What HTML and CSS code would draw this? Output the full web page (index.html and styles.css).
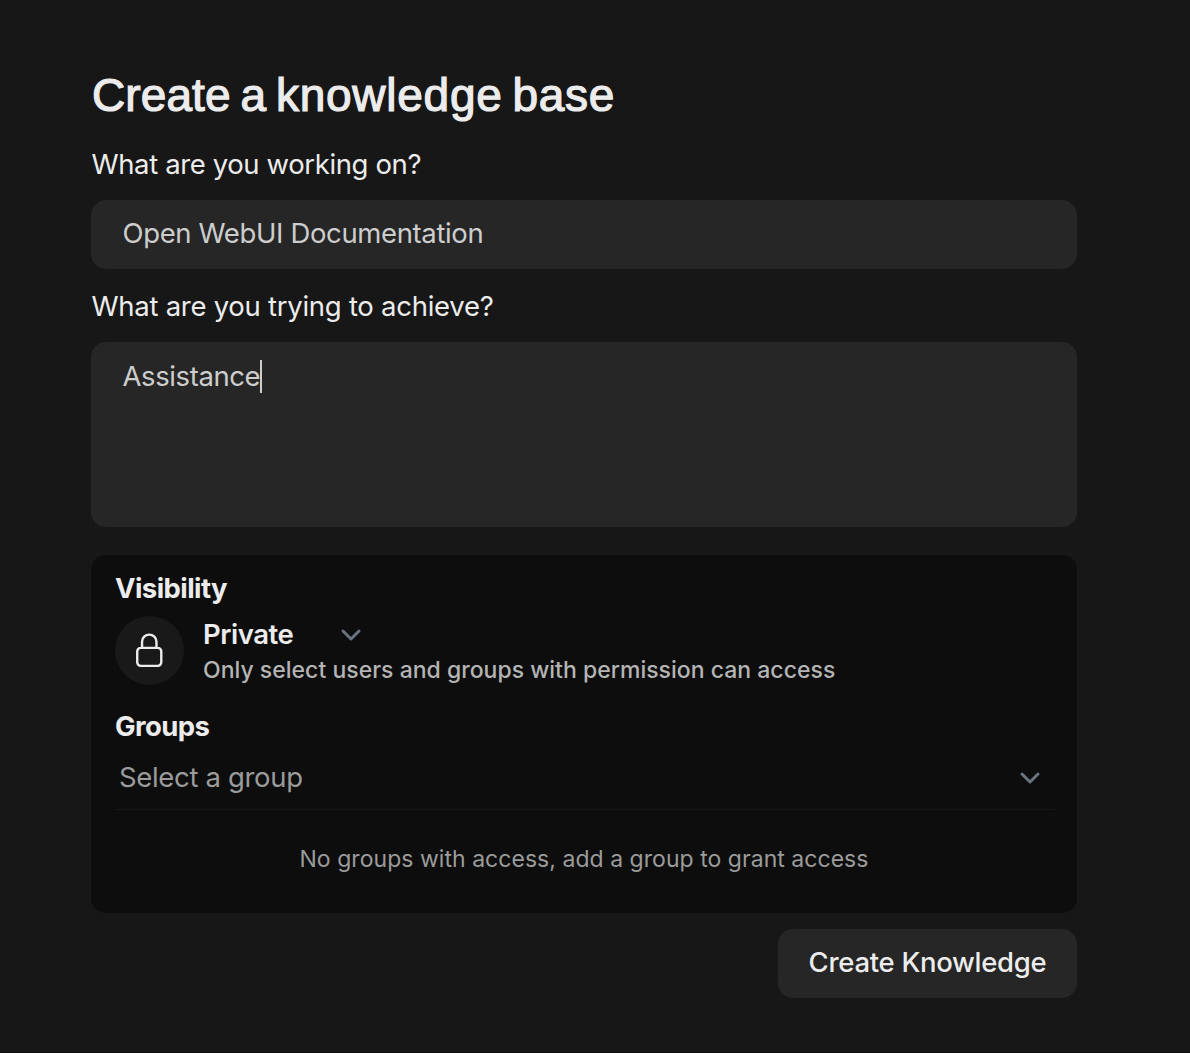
FILE: index.html
```html
<!DOCTYPE html>
<html lang="en">
<head>
<meta charset="utf-8">
<title>Create a knowledge base</title>
<link rel="stylesheet" href="styles.css">
</head>
<body>
<main class="page">
  <h1 class="title">Create a <span class="wide">knowledge</span> <span class="wide">base</span></h1>
  <div class="label label-first">What are you working on?</div>
  <div class="field name">Open WebUI Documentation</div>
  <div class="label label-second">What are you trying to achieve?</div>
  <div class="field area"><span>Assistance</span><i class="caret"></i></div>
  <section class="access">
    <h2 class="heading">Visibility</h2>
    <div class="visibility">
      <div class="badge">
        <svg class="lock" viewBox="0 0 24 24" fill="none" stroke="currentColor" stroke-width="1.5" stroke-linecap="round" stroke-linejoin="round"><path d="M16.5 10.5V6.75a4.5 4.5 0 1 0-9 0v3.75m-.75 11.25h10.5a2.25 2.25 0 0 0 2.25-2.25v-6.75a2.25 2.25 0 0 0-2.25-2.25H6.75a2.25 2.25 0 0 0-2.25 2.25v6.75a2.25 2.25 0 0 0 2.25 2.25Z"/></svg>
      </div>
      <div class="choice">
        <div class="select"><span>Private</span>
          <svg class="chevron" viewBox="0 0 20 20" fill="none" stroke="currentColor" stroke-linecap="round" stroke-linejoin="round"><path d="m6 8.5 4 4 4-4"/></svg>
        </div>
        <div class="hint">Only select users and groups with permission can access</div>
      </div>
    </div>
    <h2 class="heading groups">Groups</h2>
    <div class="group-select"><span>Select a group</span>
      <svg class="chevron" viewBox="0 0 20 20" fill="none" stroke="currentColor" stroke-linecap="round" stroke-linejoin="round"><path d="m6 8.5 4 4 4-4"/></svg>
    </div>
    <div class="empty">No groups with access, add a group to grant access</div>
  </section>
  <div class="actions"><button class="create">Create Knowledge</button></div>
</main>
</body>
</html>
```
FILE: styles.css
```css
* { box-sizing: border-box; }
body { margin: 0; background: #171717; color: #ececec; font-family: Inter, "Liberation Sans", sans-serif; font-size: 27.5px; border-bottom: 1px solid #0d0d0d; }
.page { width: 986px; height: 1052px; margin-left: 91px; padding-top: 67px; display: flex; flex-direction: column; }
.title { margin: 0; padding-left: 1px; height: 56px; line-height: 56px; font-family: "Liberation Sans", sans-serif; font-size: 46px; font-weight: 500; letter-spacing: 0.1px; word-spacing: -3.1px; -webkit-text-stroke: 1.2px currentColor; white-space: nowrap; }
.wide { letter-spacing: 0.75px; }
.label { height: 40px; line-height: 40px; margin-top: 21px; padding-left: 0.5px; letter-spacing: -0.38px; }
.label-second { margin-top: 17px; letter-spacing: -0.27px; }
.field { margin-top: 16px; border-radius: 15px; background: #262626; color: #cdcdcd; padding: 14px 31.5px; line-height: 40px; }
.name { height: 69px; padding-top: 13px; letter-spacing: -0.37px; }
.area { height: 185px; display: flex; letter-spacing: -0.4px; }
.caret { width: 2px; height: 33px; background: #cdcdcd; margin-top: 4px; }
.access { margin-top: 28px; height: 358px; border-radius: 15px; background: #0d0d0d; padding: 13px 24px; }
.heading { margin: 0; height: 40px; line-height: 40px; font-size: 27.5px; font-weight: 650; letter-spacing: -0.58px; }
.visibility { display: flex; gap: 19px; margin-top: 8px; }
.badge { width: 69px; height: 69px; border-radius: 50%; background: #191919; display: flex; align-items: center; justify-content: center; padding-right: 1px; }
.lock { width: 38.5px; height: 38.5px; }
.choice { font-weight: 500; }
.select { display: flex; align-items: center; justify-content: space-between; width: 168px; height: 36px; font-weight: 600; letter-spacing: -0.45px; }
.chevron { width: 40px; height: 40px; color: #6b7280; flex: none; stroke-width: 1.5; }
.hint { height: 36px; line-height: 36px; font-size: 23px; letter-spacing: 0.015px; color: #b4b4b4; white-space: nowrap; }
.groups { margin-top: 18px; }
.group-select { height: 64px; padding: 0 5px 2px 4px; width: 940px; border-bottom: 1px solid #171717; display: flex; align-items: center; justify-content: space-between; color: #9b9b9b; letter-spacing: -0.33px; }
.empty { height: 98px; line-height: 98px; font-size: 23px; letter-spacing: 0.04px; color: #9b9b9b; text-align: center; }
.actions { display: flex; justify-content: flex-end; margin-top: 16px; }
.create { width: 299px; height: 69px; border: 0; border-radius: 15px; background: #262626; color: #ececec; font: 500 27.5px Inter, sans-serif; letter-spacing: -0.3px; padding: 0 0 3px; white-space: nowrap; }
```
